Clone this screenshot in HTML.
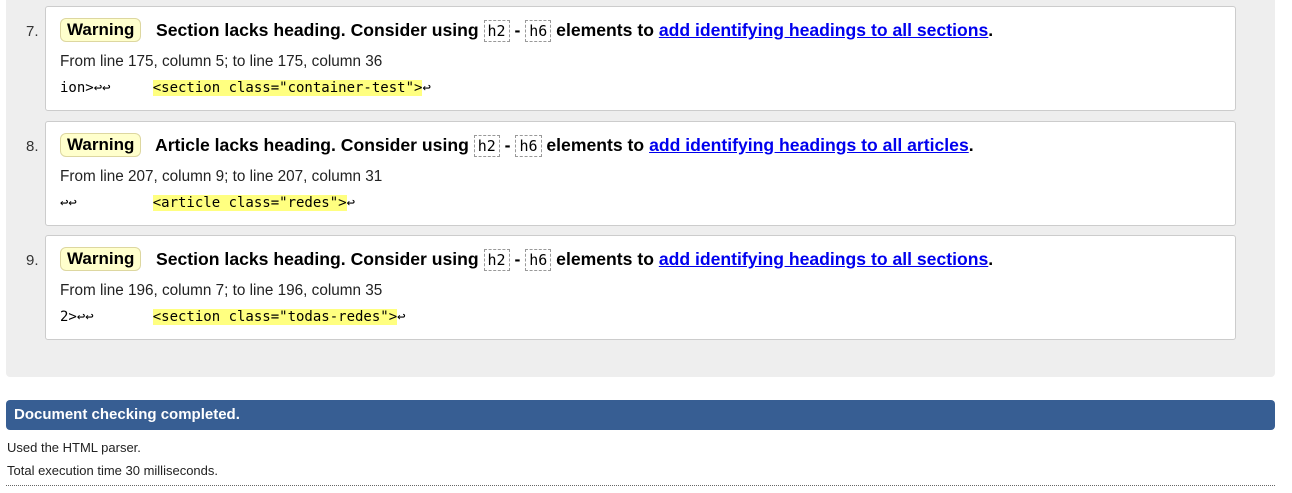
<!DOCTYPE html>
<html><head><style>
body{margin:0;width:1292px;height:493px;background:#fff;font-family:"Liberation Sans",Arial,sans-serif;position:relative;overflow:hidden}
.gray{position:absolute;left:6px;top:-6px;width:1269px;height:383px;background:#eee;border-radius:4px}
.card{position:absolute;left:45px;width:1189px;height:103px;background:#fff;border:1px solid #ccc;border-radius:3px}
.num{position:absolute;left:-20px;top:16px;font-size:15px;color:#333}
.badge{position:absolute;left:14px;top:11px;height:22px;line-height:22px;padding:0 6px;background:#ffffcc;border:1px solid #ddd7a0;border-radius:6px;font-weight:bold;font-size:17px}
.h{position:absolute;top:13px;font-weight:bold;font-size:17.6px;white-space:nowrap}
.h a{color:#0000ee;text-decoration:underline}
code{font-family:"DejaVu Sans Mono",monospace;font-weight:normal;font-size:15px;border:1px dashed #999;padding:1px 3px}
.loc{position:absolute;left:14px;top:46px;font-size:15.3px;color:#222}
.ext{position:absolute;left:14px;top:73px;font-family:"DejaVu Sans Mono",monospace;font-size:14px;white-space:pre}
.hl{background:#ffff80}
.bar{position:absolute;left:6px;top:400px;width:1269px;height:30px;background:#375e93;border-radius:4px;color:#fff;font-weight:bold;font-size:15px;line-height:30px;text-indent:8px}
.t{position:absolute;left:7px;font-size:13px;color:#222}
.dl{position:absolute;left:6px;top:485px;width:1269px;border-top:1px dotted #666}
</style></head><body>
<div class="gray"></div>
<div class="card" style="top:6px"><span class="num">7.</span><span class="badge">Warning</span><span class="h" style="left:110px">Section lacks heading. Consider using <code>h2</code> - <code>h6</code> elements to <a>add identifying headings to all sections</a>.</span><div class="loc">From line 175, column 5; to line 175, column 36</div><div class="ext">ion>↩↩     <span class="hl">&lt;section class="container-test"&gt;</span>↩</div></div>
<div class="card" style="top:121px"><span class="num">8.</span><span class="badge">Warning</span><span class="h" style="left:109px">Article lacks heading. Consider using <code>h2</code> - <code>h6</code> elements to <a>add identifying headings to all articles</a>.</span><div class="loc">From line 207, column 9; to line 207, column 31</div><div class="ext">↩↩         <span class="hl">&lt;article class="redes"&gt;</span>↩</div></div>
<div class="card" style="top:235px"><span class="num">9.</span><span class="badge">Warning</span><span class="h" style="left:110px">Section lacks heading. Consider using <code>h2</code> - <code>h6</code> elements to <a>add identifying headings to all sections</a>.</span><div class="loc">From line 196, column 7; to line 196, column 35</div><div class="ext">2>↩↩       <span class="hl">&lt;section class="todas-redes"&gt;</span>↩</div></div>
<div class="bar">Document checking completed.</div>
<div class="t" style="top:440px">Used the HTML parser.</div>
<div class="t" style="top:463px">Total execution time 30 milliseconds.</div>
<div class="dl"></div>
</body></html>
